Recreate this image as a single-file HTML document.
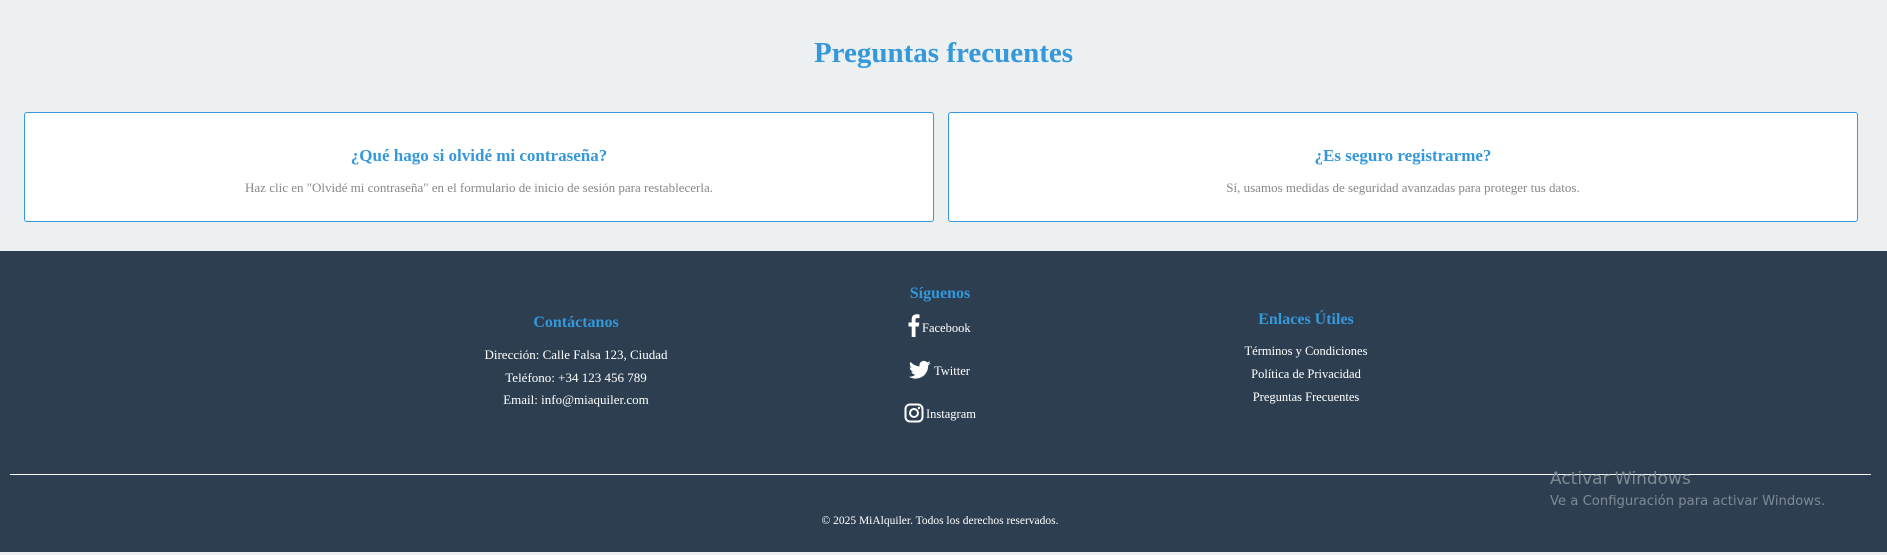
<!DOCTYPE html>
<html><head><meta charset="utf-8"><style>
*{margin:0;padding:0;box-sizing:border-box}
body{width:1887px;height:555px;background:#ecf0f1;font-family:"Liberation Serif",serif;position:relative;overflow:hidden}
.a{position:absolute;white-space:nowrap}
.c{transform:translateX(-50%)}
h1{position:absolute;left:0;width:1887px;text-align:center;top:37px;font-size:29px;color:#3498db;font-weight:bold}
.card{position:absolute;top:112px;height:110px;width:910px;background:#fff;border:1px solid #3498db;border-radius:3px;text-align:center}
.card h3{font-size:17px;color:#3498db;margin-top:33px}
.card p{font-size:13px;color:#888;margin-top:14px}
footer{position:absolute;top:251px;left:0;width:1887px;height:301px;background:#2c3e50}
.h{color:#3498db;font-weight:bold;font-size:16px}
.t{color:#fff;font-size:13px}
</style></head><body>
<h1>Preguntas frecuentes</h1>
<div class="card" style="left:24px"><h3>¿Qué hago si olvidé mi contraseña?</h3><p>Haz clic en "Olvidé mi contraseña" en el formulario de inicio de sesión para restablecerla.</p></div>
<div class="card" style="left:948px"><h3>¿Es seguro registrarme?</h3><p>Sí, usamos medidas de seguridad avanzadas para proteger tus datos.</p></div>
<footer>
<div class="a c h" style="left:576px;top:63px">Contáctanos</div>
<div class="a c t" style="left:576px;top:96px">Dirección: Calle Falsa 123, Ciudad</div>
<div class="a c t" style="left:576px;top:119px">Teléfono: +34 123 456 789</div>
<div class="a c t" style="left:576px;top:141px">Email: info@miaquiler.com</div>

<div class="a c h" style="left:940px;top:34px">Síguenos</div>
<div class="a t" style="left:907px;top:63px;font-size:12.5px"><svg width="13" height="23" viewBox="0 0 13 23" style="vertical-align:-5px;margin-right:2px"><path d="M8.5 23V12.5h3.3l.5-4H8.5V6c0-1.1.3-1.9 2-1.9h2V.5C12 .4 11 .3 9.6.3 6.7.3 4.7 2 4.7 5.3v3.2H1.5v4h3.2V23z" fill="#fff"/></svg>Facebook</div>
<div class="a t" style="left:909px;top:109px;font-size:12.5px"><svg width="22" height="20" viewBox="0 0 24 20" style="vertical-align:-5px;margin-right:3px"><path d="M23.6 2.4c-.9.4-1.8.6-2.8.8 1-.6 1.8-1.6 2.1-2.7-1 .6-2 1-3.1 1.2C18.9.7 17.6.1 16.2.1c-2.7 0-4.8 2.2-4.8 4.8 0 .4 0 .8.1 1.1C7.5 5.8 4 3.9 1.6 1 1.2 1.7.9 2.6.9 3.5c0 1.7.9 3.2 2.1 4-.8 0-1.5-.2-2.2-.6v.1c0 2.3 1.7 4.3 3.9 4.7-.4.1-.8.2-1.3.2-.3 0-.6 0-.9-.1.6 1.9 2.4 3.3 4.5 3.4-1.7 1.3-3.7 2.1-6 2.1-.4 0-.8 0-1.200-.1 2.1 1.4 4.7 2.2 7.4 2.2 8.9 0 13.7-7.4 13.7-13.7v-.6c1-.7 1.8-1.5 2.5-2.5z" fill="#fff"/></svg>Twitter</div>
<div class="a t" style="left:904px;top:152px;font-size:12.5px"><svg width="20" height="20" viewBox="0 0 20 20" style="vertical-align:-5px;margin-right:2px"><rect x="1.5" y="1.5" width="17" height="17" rx="4.5" fill="none" stroke="#fff" stroke-width="2"/><circle cx="10" cy="10" r="4" fill="none" stroke="#fff" stroke-width="2"/><circle cx="15" cy="5" r="1.2" fill="#fff"/></svg>Instagram</div>

<div class="a c h" style="left:1306px;top:60px">Enlaces Útiles</div>
<div class="a c t" style="left:1306px;top:93px;font-size:12.5px">Términos y Condiciones</div>
<div class="a c t" style="left:1306px;top:116px;font-size:12.5px">Política de Privacidad</div>
<div class="a c t" style="left:1306px;top:139px;font-size:12.5px">Preguntas Frecuentes</div>

<div class="a" style="left:10px;top:223px;width:1861px;height:1px;background:#fff"></div>
<div class="a" style="left:1550px;top:218px;color:#7f8a95;font-family:'DejaVu Sans',sans-serif;font-size:17px">Activar Windows</div>
<div class="a" style="left:1550px;top:243px;color:#7f8a95;font-family:'DejaVu Sans',sans-serif;font-size:13.2px">Ve a Configuración para activar Windows.</div>
<div class="a c t" style="left:940px;top:264px;font-size:11.5px">© 2025 MiAlquiler. Todos los derechos reservados.</div>
</footer>
</body></html>
